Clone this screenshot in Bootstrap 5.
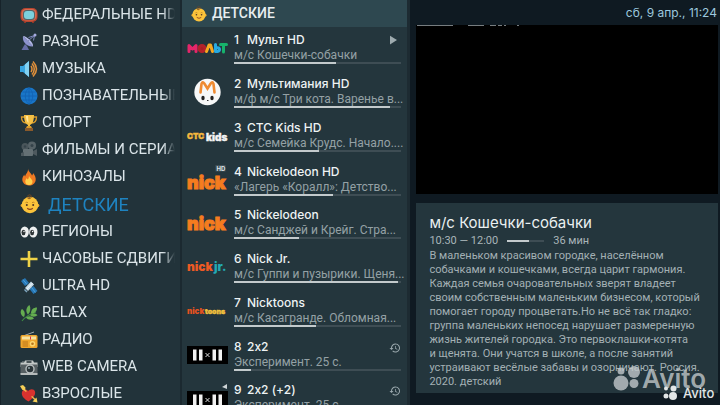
<!DOCTYPE html>
<html lang="ru">
<head>
<meta charset="utf-8">
<meta name="viewport" content="width=device-width, initial-scale=1">
<title>ТВ — Детские</title>
<link href="https://cdn.jsdelivr.net/npm/bootstrap@5.3.0/dist/css/bootstrap.min.css" rel="stylesheet">
<style>
  body { background: #0f1a22; color: #e3e9eb; font-family: Roboto, "Noto Sans", sans-serif; }
  a { color: inherit; text-decoration: none; }
  .groups { flex: 0 0 25%; background: #22333a; padding: 1px 5px 0 19px; border-left: 1px solid #17232a; }
  .group-link { display: flex; align-items: center; gap: 4px; height: 27px; font-size: 15px; color: #dbe5e9;
    -webkit-mask-image: linear-gradient(90deg, #000 92%, transparent); mask-image: linear-gradient(90deg, #000 92%, transparent); }
  .group-link svg { flex: 0 0 18px; width: 18px; height: 18px; }
  .group-link.active { height: 28px; gap: 8px; font-size: 18px; color: #1e83c0; }
  .group-link.active svg { flex-basis: 20px; width: 20px; height: 20px; }
  .channels { flex: 0 0 32%; min-width: 0; background: #24363d; border-left: 2px solid #1b2930; border-right: 3px solid #1d2b32; }
  .channels-head { height: 27px; background: #2e4850; font-size: 14px; padding-left: 8px; color: #e8eef0; }
  .channel-list { padding: 4px 6px 0 5px; }
  .channel { height: 44px; gap: 6px; }
  .channel:nth-child(4n) { height: 43px; }
  .channel-text { flex: 1 1 0; min-width: 0; }
  .logo { flex: 0 0 41px; height: 33px; }
  .logo svg { width: 41px; height: 33px; overflow: visible; }
  .title-line { font-family: Inter, sans-serif; font-feature-settings: "calt" 0; font-size: 12px; line-height: 17px; font-weight: 500; color: #eef3f4; }
  .title-line b { font-weight: 500; flex: 0 0 13px; }
  .now { font-size: 12px; line-height: 14px; color: #94a1a5; }
  .progress { height: 2px; border-radius: 0; background: #3e4d54; --bs-progress-bar-bg: #c3cacc; }
  .side { min-width: 0; background: #0f1a22; padding: 0 2px 12px 6px; }
  .clock { height: 25px; font-family: Inter, sans-serif; font-size: 12px; color: #9cc8de; padding-right: 1px; }
  .screen { height: 169px; background: #000; }
  .screen svg { width: 110px; height: 2px; }
  .info { background: #24363d; margin-top: 9px; padding: 9px 8px 0 13px; }
  .info h1 { font-family: Inter, sans-serif; font-size: 15px; line-height: 22px; font-weight: 400; margin: 0; color: #eaf0f1; }
  .meta { font-size: 11px; line-height: 14px; color: #a9b5b9; gap: 9px; }
  .meta .progress { width: 37px; }
  .about { font-size: 11px; line-height: 14px; color: #a3b0b4; white-space: nowrap; margin: 1px 0 0; }
  .marks { right: 1px; bottom: 1px; width: 106px; height: 42px; }
</style>
</head>
<body>
<svg class="d-none" aria-hidden="true">
  <symbol id="baby" viewBox="0 0 20 20">
    <circle cx="2.400" cy="11.500" r="1.800" fill="#e9a92e"/><circle cx="17.600" cy="11.500" r="1.800" fill="#e9a92e"/>
    <circle cx="10" cy="11" r="8.300" fill="#fbc33b"/><path d="M10 4C7 3 7.500 .8 9.500 .9c2.300 .1 2.500 2.400.8 3.400-1.200.7-2.700.2-3-.7" fill="none" stroke="#7c4a20" stroke-width="1"/>
    <circle cx="6.800" cy="11" r="1" fill="#4b3426"/><circle cx="13.200" cy="11" r="1" fill="#4b3426"/>
    <path d="M5.500 8.700q1.300-1 2.500 0M12 8.700q1.300-1 2.500 0" fill="none" stroke="#a86b1c" stroke-width=".7"/>
    <path d="M7.200 14.300q2.800 2.200 5.600 0" fill="none" stroke="#8b3f20" stroke-width="1.100"/>
  </symbol>
  <symbol id="history" viewBox="0 0 24 24"><path d="M13 3a9 9 0 0 0-9 9H1l4 4 4-4H6a7 7 0 1 1 2 4.900l-1.400 1.500A9 9 0 1 0 13 3zm-1 5v5l4.300 2.500.7-1.200-3.500-2.100V8z" fill="#9aa8ad"/></symbol>
  <symbol id="twobytwo" viewBox="0 0 41 18"><path d="M0 0h41v18H0z"/><path d="M6 3.500h3.500v11H6zM12 3.500h3.500v11H12zM25.500 3.500H29v11h-3.500zM31.500 3.500H35v11h-3.500z" fill="#f2f2f2"/><path d="M18.500 7l4 4m0-4l-4 4" stroke="#ddd"/></symbol>
</svg>

<div class="d-flex vh-100 overflow-hidden">
  <nav class="groups overflow-hidden text-nowrap" aria-label="Группы каналов">
    <a class="group-link" href="#"><svg viewBox="0 0 18 18"><rect x=".5" y="2" width="17" height="14" rx="5" fill="#b8452f"/><rect x="1.500" y="3" width="15" height="11.500" rx="4.500" fill="#d66b50"/><rect x="3" y="4" width="12" height="10" rx="3.500" fill="#55656a"/><rect x="4" y="5" width="10" height="8" rx="3" fill="#7cd0dd"/><path d="M4 16h2v1H4zM12 16h2v1h-2z" fill="#8d3728"/></svg>ФЕДЕРАЛЬНЫЕ HD</a>
    <a class="group-link" href="#"><svg viewBox="0 0 18 18"><path d="M3 3c-1 5 3 11 10 10.500z" fill="#8d93cf"/><path d="M3 3l10 10.500C14 10 7 3 3 3z" fill="#b3b8e6"/><path d="M8 8l6.500-5.500M8.500 4.500l6 -2-1 5" stroke="#8188bd" fill="none"/><circle cx="15" cy="2" r="1.500" fill="#a5abdf"/><path d="M5 11l-3.500 6H9l-2-4z" fill="#666da6"/></svg>РАЗНОЕ</a>
    <a class="group-link" href="#"><svg viewBox="0 0 18 18"><path d="M0 6h3l6-5v16l-6-5H0z" fill="#39a5df"/><path d="M5 4.500L9 1v16l-4-3.500z" fill="#82d1f1"/><path d="M11 6q2 3 0 6M12 3.500q4.500 5.500 0 11M13 1.500q7 7.500 0 15" fill="none" stroke="#e0903b" stroke-width="1.500"/></svg>МУЗЫКА</a>
    <a class="group-link" href="#"><svg viewBox="0 0 18 18"><circle cx="9" cy="9" r="8.500" fill="#1976c8"/><path d="M1 9h16M9 1v16M2.500 5h13M2.500 13h13M9 .5c-5 5-5 12 0 17M9 .5c5 5 5 12 0 17" fill="none" stroke="#1261b0" stroke-width=".8"/></svg>ПОЗНАВАТЕЛЬНЫЕ</a>
    <a class="group-link" href="#"><svg viewBox="0 0 18 18"><path d="M4.500 3H1.500c0 4 2 6 5 6M13.500 3h3c0 4-2 6-5 6" fill="none" stroke="#d99b2b" stroke-width="1.300"/><path d="M4 1h10c0 6-1.500 9-4 10v2H8v-2C5.500 10 4 7 4 1z" fill="#f5c044"/><path d="M6 2h2l.5 7Q6 7 6 2z" fill="#ffe59a"/><path d="M7 12h4l1 2H6z" fill="#d99b2b"/><path d="M5 14h8v3H5z" fill="#8a5a2b"/></svg>СПОРТ</a>
    <a class="group-link" href="#"><svg viewBox="0 0 18 18"><circle cx="5" cy="5.500" r="3.500" fill="#4a565b"/><circle cx="12" cy="4.500" r="4" fill="#566267"/><circle cx="12" cy="4.500" r="1.500" fill="#35434a"/><circle cx="5" cy="5.500" r="1.200" fill="#35434a"/><rect x="3" y="8" width="10" height="7" rx="1" fill="#647074"/><path d="M13 10l4-2v7l-4-2z" fill="#4d595e"/><path d="M1 12l3-1v4H1z" fill="#4d595e"/></svg>ФИЛЬМЫ И СЕРИАЛЫ</a>
    <a class="group-link" href="#"><svg viewBox="0 0 18 18"><path d="M8 .5c.5 3.500 3 4 4 7 .8-.8 1-1.500 1-2.500 2 2.500 3 4.800 2.700 7C15.300 15.500 12.500 17.500 9 17.500S2.500 15.300 2.300 11.800C2.200 9.500 3.500 8 4.200 6.500c.3 1 .5 1.500 1 2C5.500 5.500 8.500 4.500 8 .5z" fill="#f07a22"/><path d="M9 7.500c.3 2.500 3.500 3.500 3.500 6.200 0 2-1.500 3.300-3.500 3.300s-3.700-1.300-3.700-3.300c0-1.700 1-2.700 1.500-3.700.3.800.5 1 1 1.500C8.800 10.500 9 9 9 7.500z" fill="#ffd04b"/></svg>КИНОЗАЛЫ</a>
    <a class="group-link active" href="#" aria-current="page"><svg><use href="#baby"/></svg>ДЕТСКИЕ</a>
    <a class="group-link" href="#"><svg viewBox="0 0 18 18"><ellipse cx="4.700" cy="9" rx="4.200" ry="5.500" fill="#eef0f0"/><ellipse cx="13.300" cy="9" rx="4.200" ry="5.500" fill="#eef0f0"/><ellipse cx="3.500" cy="9.500" rx="2" ry="2.700" fill="#2d3436"/><ellipse cx="12.100" cy="9.500" rx="2" ry="2.700" fill="#2d3436"/><circle cx="4" cy="8.500" r=".7" fill="#fff"/><circle cx="12.600" cy="8.500" r=".7" fill="#fff"/></svg>РЕГИОНЫ</a>
    <a class="group-link" href="#"><svg viewBox="0 0 18 18"><path d="M7.700 1h2.600v6.700H17.500v2.600h-7.200V17H7.700v-6.700H.5V7.700h7.200z" fill="#efd348"/></svg>ЧАСОВЫЕ СДВИГИ</a>
    <a class="group-link" href="#"><svg viewBox="0 0 18 18"><path d="M1 4l4-3 4 5-4 3zM9.500 12l4-3 4 5-4 3z" fill="#2777b5"/><path d="M3 2.500l4 5M11.500 10.500l4 5" stroke="#4ea3dc"/><path d="M5 11l6-6.500 3 3L8 14z" fill="#c7dce8"/><path d="M7 12l5.500-6" stroke="#eff6fa"/><path d="M4.500 12.500l2.500 2.500" stroke="#7fa6bf" stroke-width="1.500"/></svg>ULTRA HD</a>
    <a class="group-link" href="#"><svg viewBox="0 0 18 18"><path d="M2 17C5 13 10 10 16 8" fill="none" stroke="#3f8b43" stroke-width="1.200"/><path d="M4 13C0 11 0 7 2 5c3 2 3.500 5 2 8zM8 10.500C5 7 6.500 3 9.500 1c1.500 3.500 1 7-1.500 9.500zM11 9.500c0-4 2.500-6 6-6 0 4-2.500 6-6 6zM6 13.500c3-2 6-1.500 8 1-3 2-6 1.500-8-1zM10 11c3-2 6-1.800 7.500.3-2.500 2-5.500 1.700-7.500-.3z" fill="#65ad50"/></svg>RELAX</a>
    <a class="group-link" href="#"><svg viewBox="0 0 18 18"><path d="M3 5L14 1" stroke="#a7acad"/><rect x=".5" y="4" width="17" height="13" rx="1.500" fill="#efa62d"/><rect x="2" y="5.500" width="14" height="3" fill="#f7e2a0"/><path d="M10.500 5.500v3" stroke="#d34"/><circle cx="12.500" cy="12.800" r="2.800" fill="#fbd66e"/><circle cx="12.500" cy="12.800" r="1.300" fill="#b9741b"/><path d="M2.500 11h5.500M2.500 13h5.500M2.500 15h5.500" stroke="#b9741b"/></svg>РАДИО</a>
    <a class="group-link" href="#"><svg viewBox="0 0 18 18"><path d="M5 2.500h8l1 2h3.500V9H.5V4.500H4z" fill="#c2c7c6"/><rect x=".5" y="6.500" width="17" height="10" rx="1" fill="#565f62"/><path d="M.5 15h17v2H.5z" fill="#b5baba"/><rect x="6.500" y="3" width="5" height="2" fill="#4a5558"/><circle cx="10" cy="11" r="4.700" fill="#b9bfc0"/><circle cx="10" cy="11" r="3.300" fill="#2b3539"/><circle cx="9" cy="10" r="1" fill="#9aa8ae"/><path d="M2 3.500h2v1H2z" fill="#8c9496"/></svg>WEB CAMERA</a>
    <a class="group-link" href="#"><svg viewBox="0 0 18 18"><path d="M8.500 16.500C4 14 1 10.500 2 7c.8-3 4.500-3.500 6-.8C10 3.500 14 3.500 15 6.500c1 4-3 7.500-6.500 10z" fill="#d9322f"/><path d="M2 2.500l13 12" stroke="#e9b44c" stroke-width="1.500"/><path d="M0 1l3-1 2.500 2.500L5 5.500 2.500 5zM12.500 16.500l4-4 1 5z" fill="#f6cf57"/><path d="M6.500 6.500l5 5" stroke="#d9322f" stroke-width="3"/></svg>ВЗРОСЛЫЕ</a>
  </nav>

  <main class="channels">
    <h2 class="channels-head d-flex align-items-center gap-1 m-0 fw-medium"><svg width="18" height="16"><use href="#baby"/></svg>ДЕТСКИЕ</h2>
    <div class="channel-list">
      <div class="channel d-flex">
        <div class="logo"><svg viewBox="0 0 41 33"><g fill="none" stroke-width="3" stroke-linecap="round" stroke-linejoin="round"><path d="M2 20.500v-6l3.500 3.500L9 14.500v6" stroke="#e5266a"/><circle cx="15" cy="17.500" r="3" fill="#a81f25" stroke="#b3222a"/><path d="M19.500 20.500l2.500-6.500h1.500l2 6.500" stroke="#f6a821"/><path d="M28.500 13.500v7h2q2-.3 2-2t-2-1.800h-1.500" stroke="#27aae1"/><path d="M33.500 13.500h6M36.500 14v7" stroke="#17b26b"/></g></svg></div>
        <div class="channel-text">
          <div class="title-line d-flex"><b>1</b><span>Мульт HD</span><svg class="ms-auto mt-1 me-1" width="7" height="10" viewBox="0 0 8 10"><path d="M0 0l8 5-8 5z" fill="#9eabaf"/></svg></div>
          <div class="now text-nowrap">м/с Кошечки-собачки</div>
          <div class="progress"><div class="progress-bar" style="width:61%"></div></div>
        </div>
      </div>
      <div class="channel d-flex">
        <div class="logo"><svg viewBox="0 0 41 33"><circle cx="20.500" cy="17" r="13.200" fill="#f7f8f8"/><path d="M13.500 17.500L14.500 9q1-3 2.800-.5l3.200 5 3.200-5q1.800-2.500 2.800.5l1 8.500" fill="none" stroke="#ef8b32" stroke-width="2.600" stroke-linecap="round"/><ellipse cx="16" cy="23" rx="1.700" ry="2.300" fill="#222"/><ellipse cx="25" cy="23" rx="1.700" ry="2.300" fill="#222"/><path d="M20 25.500h1.500" stroke="#333"/></svg></div>
        <div class="channel-text">
          <div class="title-line d-flex"><b>2</b><span>Мультимания HD</span></div>
          <div class="now text-nowrap">м/ф м/с Три кота. Варенье в...</div>
          <div class="progress"><div class="progress-bar" style="width:93%"></div></div>
        </div>
      </div>
      <div class="channel d-flex">
        <div class="logo"><svg viewBox="0 0 41 33" font-family="Inter" font-weight="900"><text x="0" y="20" font-size="8" fill="#f5b83d" stroke="#f5b83d" stroke-width=".4">СТС</text><text x="19" y="22" font-size="10" fill="#f3f3f3" stroke="#f3f3f3" stroke-width=".4">kids</text></svg></div>
        <div class="channel-text">
          <div class="title-line d-flex"><b>3</b><span>СТС Kids HD</span></div>
          <div class="now text-nowrap">м/с Семейка Крудс. Начало....</div>
          <div class="progress"><div class="progress-bar" style="width:51%"></div></div>
        </div>
      </div>
      <div class="channel d-flex">
        <div class="logo"><svg viewBox="0 0 41 33" font-family="Inter"><text x="0" y="26" font-weight="900" font-size="18" fill="#f57c1f" stroke="#f57c1f">nick</text><path d="M28.500 2h10v6.500h-10z" fill="#42525a"/><text x="29.500" y="7.500" font-size="6" font-weight="700" fill="#dfe4e6">HD</text></svg></div>
        <div class="channel-text">
          <div class="title-line d-flex"><b>4</b><span>Nickelodeon HD</span></div>
          <div class="now text-nowrap">«Лагерь «Коралл»: Детство...</div>
          <div class="progress"><div class="progress-bar" style="width:59%"></div></div>
        </div>
      </div>
      <div class="channel d-flex">
        <div class="logo"><svg viewBox="0 0 41 33" font-family="Inter"><text x="0" y="24" font-weight="900" font-size="18" fill="#f57c1f" stroke="#f57c1f">nick</text></svg></div>
        <div class="channel-text">
          <div class="title-line d-flex"><b>5</b><span>Nickelodeon</span></div>
          <div class="now text-nowrap">м/с Санджей и Крейг. Стра...</div>
          <div class="progress"><div class="progress-bar" style="width:39%"></div></div>
        </div>
      </div>
      <div class="channel d-flex">
        <div class="logo"><svg viewBox="0 0 41 33" font-family="Inter" font-weight="900" font-size="12"><text x="0" y="21" fill="#ee5a24">nick</text><text x="27" y="21" fill="#23a9b4">jr.</text></svg></div>
        <div class="channel-text">
          <div class="title-line d-flex"><b>6</b><span>Nick Jr.</span></div>
          <div class="now text-nowrap">м/с Гуппи и пузырики. Щеня...</div>
          <div class="progress"><div class="progress-bar" style="width:98%"></div></div>
        </div>
      </div>
      <div class="channel d-flex">
        <div class="logo"><svg viewBox="0 0 41 33" font-family="Inter" font-weight="900" font-size="8"><text x="0" y="20" fill="#e5521e">nick</text><text x="18" y="20" font-size="7" fill="#f0c03c" stroke="#f0c03c" stroke-width=".4">toons</text></svg></div>
        <div class="channel-text">
          <div class="title-line d-flex"><b>7</b><span>Nicktoons</span></div>
          <div class="now text-nowrap">м/с Касагранде. Обломная...</div>
          <div class="progress"><div class="progress-bar" style="width:49%"></div></div>
        </div>
      </div>
      <div class="channel d-flex">
        <div class="logo"><svg viewBox="0 0 41 33"><use href="#twobytwo" y="8" width="41" height="18"/></svg></div>
        <div class="channel-text">
          <div class="title-line d-flex"><b>8</b><span>2x2</span><svg class="ms-auto mt-1" width="12" height="12"><use href="#history"/></svg></div>
          <div class="now text-nowrap">Эксперимент. 25 с.</div>
          <div class="progress"><div class="progress-bar" style="width:10%"></div></div>
        </div>
      </div>
      <div class="channel d-flex">
        <div class="logo"><svg viewBox="0 0 41 33"><use href="#twobytwo" y="10" width="41" height="18"/><path d="M35 6l5-3v5z" fill="#cfd5d7"/></svg></div>
        <div class="channel-text">
          <div class="title-line d-flex"><b>9</b><span>2x2 (+2)</span><svg class="ms-auto mt-1" width="12" height="12"><use href="#history"/></svg></div>
          <div class="now text-nowrap">Эксперимент. 25 с.</div>
          <div class="progress"><div class="progress-bar" style="width:10%"></div></div>
        </div>
      </div>
    </div>
  </main>

  <aside class="side d-flex flex-column flex-grow-1 position-relative overflow-hidden">
    <time class="clock d-flex align-items-center justify-content-end" datetime="2022-04-09T11:24">сб, 9 апр., 11:24</time>
    <div class="screen flex-shrink-0 d-flex align-items-start"><svg viewBox="0 0 110 2"><path d="M1 .5h36M52 .5h16M74 .5h6M82 .5h4M88 .5h2M101 .5h2" stroke="#777d80"/></svg></div>
    <section class="info flex-grow-1">
      <h1>м/с Кошечки-собачки</h1>
      <div class="meta d-flex align-items-center"><span>10:30 — 12:00</span><div class="progress"><div class="progress-bar" style="width:60%"></div></div><span>36 мин</span></div>
      <p class="about">В маленьком красивом городке, населённом<br>собачками и кошечками, всегда царит гармония.<br>Каждая семья очаровательных зверят владеет<br>своим собственным маленьким бизнесом, который<br>помогает городу процветать.Но не всё так гладко:<br>группа маленьких непосед нарушает размеренную<br>жизнь жителей городка. Это первоклашки-котята<br>и щенята. Они учатся в школе, а после занятий<br>устраивают весёлые забавы и озорничают. Россия.<br>2020. детский</p>
    </section>
    <svg class="marks position-absolute" viewBox="0 0 106 42" font-family="Inter" aria-label="Avito">
      <g fill="#c2c8ca" fill-opacity=".8"><circle cx="8" cy="21" r="7.500"/><circle cx="21" cy="10" r="6"/><circle cx="8" cy="9" r="3.500"/><circle cx="21" cy="21.500" r="4.500"/><text x="29" y="26" font-size="26" font-weight="600">Avito</text></g>
      <g fill="#e2e6e7"><circle cx="60" cy="34" r="4"/><circle cx="60.500" cy="26.500" r="3"/><circle cx="53" cy="26.500" r="2"/><circle cx="53" cy="34" r="2.500"/><text x="70" y="36" font-size="13" font-weight="500">Avito</text></g>
    </svg>
  </aside>
</div>
<script src="https://cdn.jsdelivr.net/npm/bootstrap@5.3.0/dist/js/bootstrap.bundle.min.js"></script>
</body>
</html>
